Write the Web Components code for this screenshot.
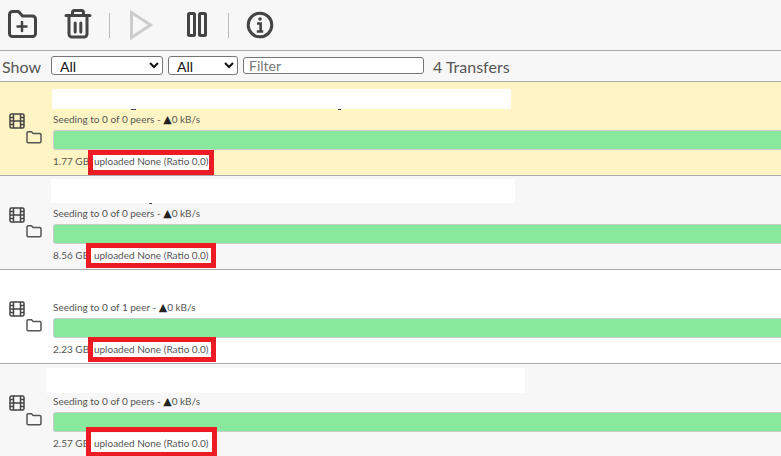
<!DOCTYPE html>
<html>
<head>
<meta charset="utf-8">
<title>Transfers</title>
<style>
  html, body {
    margin: 0;
    height: 456px;
    overflow: hidden;
    background: #fff;
    font-family: Lato, "Liberation Sans", sans-serif;
    color: #444;
  }
</style>
</head>
<body>
<tr-toolbar></tr-toolbar>
<tr-filterbar count="4 Transfers"></tr-filterbar>

<tr-row tone="selected" status="Seeding to 0 of 0 peers - " size="1.77 GB,">
  <tr-mark kind="wash" box="93 73 116 15"></tr-mark>
  <tr-mark kind="hide" box="52 7 459 20"></tr-mark>
  <tr-mark kind="speck" box="131 27 5 1"></tr-mark>
  <tr-mark kind="speck" box="338 27 3 1"></tr-mark>
  <tr-mark kind="ring" box="88 68 126 25"></tr-mark>
</tr-row>
<tr-row tone="even" status="Seeding to 0 of 0 peers - " size="8.56 GB,">
  <tr-mark kind="wash" box="91 72 120 15"></tr-mark>
  <tr-mark kind="hide" box="51 3 464 24"></tr-mark>
  <tr-mark kind="speck" box="149 27 3 1"></tr-mark>
  <tr-mark kind="ring" box="86 67 130 25"></tr-mark>
</tr-row>
<tr-row tone="odd" status="Seeding to 0 of 1 peer - " size="2.23 GB,">
  <tr-mark kind="ring" box="88 67 128 25"></tr-mark>
</tr-row>
<tr-row tone="even" status="Seeding to 0 of 0 peers - " size="2.57 GB,">
  <tr-mark kind="wash" box="91 69 121 17"></tr-mark>
  <tr-mark kind="hide" box="46 4 479 25"></tr-mark>
  <tr-mark kind="ring" box="86 63 131 30"></tr-mark>
</tr-row>

<script>
  const toolbarTemplate = document.createElement("template");
  toolbarTemplate.innerHTML = `
    <style>
      :host {
        display: flex;
        align-items: center;
        height: 50px;
        padding-left: 6px;
        background: #f7f7f7;
        border-bottom: 1px solid #aaa;
      }
      svg {
        width: 32px;
        height: 32px;
        fill: none;
        stroke: #444;
        stroke-width: 3;
        stroke-linejoin: round;
        stroke-linecap: round;
      }
      .next { margin-left: 24px; }
      .sep {
        width: 1px;
        height: 25px;
        margin: 1px 15px 0;
        background: #bbb;
      }
    </style>
    <svg viewBox="0 0 32 32">
      <path d="M3.500 5.500a3 3 0 0 1 3-3h6l4 4.500h10a3 3 0 0 1 3 3v14.500a3 3 0 0 1-3 3h-20a3 3 0 0 1-3-3z"/>
      <path d="M16 13v9M11.500 17.500h9" stroke-width="2.500"/>
    </svg>
    <svg class="next" viewBox="0 0 32 32">
      <path d="M4 6.500h24M10.500 6V3.500a2 2 0 0 1 2-2h7a2 2 0 0 1 2 2V6"/>
      <path d="M7 7v18a3 3 0 0 0 3 3h12a3 3 0 0 0 3-3V7"/>
      <path d="M13.200 14v9M18.800 14v9"/>
    </svg>
    <div class="sep"></div>
    <svg viewBox="0 0 32 32" style="stroke:#ccc">
      <path d="M6.500 3.500v25l19-12.500z" stroke-linejoin="miter"/>
    </svg>
    <svg class="next" viewBox="0 0 32 32">
      <rect x="7.500" y="4.500" width="6" height="22" rx="1"/>
      <rect x="18.500" y="4.500" width="6" height="22" rx="1"/>
    </svg>
    <div class="sep"></div>
    <svg viewBox="0 0 32 32">
      <circle cx="16" cy="16" r="11.800"/>
      <circle cx="16" cy="10" r="1.800" fill="#444" stroke="none"/>
      <path d="M13 14.500h3.600V22M12.800 22.500h6.400" stroke-linecap="butt" stroke-width="2.600" stroke-linejoin="miter"/>
    </svg>
  `;

  class TrToolbar extends HTMLElement {
    constructor() {
      super();
      this.attachShadow({ mode: "open" });
      this.shadowRoot.appendChild(toolbarTemplate.content.cloneNode(true));
    }
  }

  const filterTemplate = document.createElement("template");
  filterTemplate.innerHTML = `
    <style>
      :host {
        display: flex;
        align-items: center;
        height: 30px;
        padding-left: 2px;
        background: #f7f7f7;
        border-bottom: 1px solid #aaa;
        color: #555;
        font-size: 16px;
      }
      select, input {
        box-sizing: border-box;
        font-family: Lato, "Liberation Sans", sans-serif;
        font-size: 14px;
        background: #fff;
        color: #111;
        border: 1px solid #767676;
        border-radius: 3px;
      }
      select { height: 19px; padding: 0 0 0 4px; margin-top: -1px; line-height: 17px; }
      .show { width: 49px; }
      .s1 { width: 112px; margin-right: 5px; }
      .s2 { width: 70px; margin-right: 5px; }
      input { width: 181px; height: 17px; padding: 0 5px; margin-top: -1px; }
      input::placeholder { color: #777; }
      .count { margin-left: 9px; }
    </style>
    <span class="show">Show</span>
    <select class="s1"><option>All</option></select>
    <select class="s2"><option>All</option></select>
    <input placeholder="Filter">
    <span class="count"></span>
  `;

  class TrFilterbar extends HTMLElement {
    constructor() {
      super();
      this.attachShadow({ mode: "open" });
      this.shadowRoot.appendChild(filterTemplate.content.cloneNode(true));
    }

    connectedCallback() {
      this.shadowRoot.querySelector(".count").textContent = this.getAttribute("count");
    }
  }

  const rowTemplate = document.createElement("template");
  rowTemplate.innerHTML = `
    <style>
      :host {
        display: grid;
        grid-template-columns: 53px 1fr;
        position: relative;
        height: 93px;
        border-bottom: 1px solid #aaa;
        font-size: 10px;
        color: #555;
        overflow: hidden;
      }
      :host([tone="selected"]) { background: #fff5c4; }
      :host([tone="even"]) { background: #f7f7f7; }
      :host([tone="odd"]) { background: #fff; }
      .icons { display: flex; flex-direction: column; padding: 31px 0 0 9px; }
      svg {
        fill: none;
        stroke: #444;
        stroke-width: 1.500;
      }
      .folder { margin: 2px 0 0 17px; stroke: #555; }
      .main { position: relative; z-index: 1; padding-top: 30px; min-width: 0; }
      .status { height: 14px; line-height: 14px; margin-bottom: 4px; white-space: pre; }
      .up { font-family: "DejaVu Sans", sans-serif; font-size: 11px; line-height: 10px; color: #222; }
      .bar {
        height: 18px;
        background: #88e89c;
        border: 1px solid #ccc;
        border-right: 0;
        border-radius: 3px 0 0 3px;
        margin-bottom: 4px;
      }
      .size { height: 14px; line-height: 14px; white-space: pre; }
    </style>
    <div class="icons">
      <svg width="16" height="16" viewBox="0 0 16 16">
        <rect x="1" y="1" width="14" height="14" rx="1.500"/>
        <path d="M4.500 1v14M11.500 1v14M4.500 8h7M1 4.500h3.500M1 8h3.500M1 11.500h3.500M11.500 4.500h3.500M11.500 8h3.500M11.500 11.500h3.500"/>
      </svg>
      <svg class="folder" width="16" height="13" viewBox="0 0 16 13">
        <path d="M1 2a1.200 1.200 0 0 1 1.200-1.200h3.300l1.600 1.800h6.700a1.200 1.200 0 0 1 1.200 1.200v6.800a1.200 1.200 0 0 1-1.200 1.200h-11.600a1.200 1.200 0 0 1-1.200-1.200z"/>
      </svg>
    </div>
    <div class="main">
      <div class="status"><span class="text"></span><span class="up">▲</span>0 kB/s</div>
      <div class="bar"></div>
      <div class="size"></div>
    </div>
    <slot></slot>
  `;

  class TrRow extends HTMLElement {
    constructor() {
      super();
      this.attachShadow({ mode: "open" });
      this.shadowRoot.appendChild(rowTemplate.content.cloneNode(true));
    }

    connectedCallback() {
      const root = this.shadowRoot;
      root.querySelector(".text").textContent = this.getAttribute("status");
      root.querySelector(".size").textContent = this.getAttribute("size") + " uploaded None (Ratio 0.0)";
    }
  }

  const markTemplate = document.createElement("template");
  markTemplate.innerHTML = `
    <style>
      :host { position: absolute; box-sizing: border-box; z-index: 2; }
      :host([kind="wash"]) { background: #fff; z-index: 0; }
      :host([kind="hide"]) { background: #fff; }
      :host([kind="speck"]) { background: #445; }
      :host([kind="ring"]) { border: 5px solid #ed1c24; }
    </style>
  `;

  // redaction boxes and red highlights drawn over the row, box = "x y w h" from the row corner
  class TrMark extends HTMLElement {
    constructor() {
      super();
      this.attachShadow({ mode: "open" });
      this.shadowRoot.appendChild(markTemplate.content.cloneNode(true));
    }

    connectedCallback() {
      const [x, y, w, h] = this.getAttribute("box").split(" ");
      this.style.left = x + "px";
      this.style.top = y + "px";
      this.style.width = w + "px";
      this.style.height = h + "px";
    }
  }

  customElements.define("tr-toolbar", TrToolbar);
  customElements.define("tr-filterbar", TrFilterbar);
  customElements.define("tr-row", TrRow);
  customElements.define("tr-mark", TrMark);
</script>
</body>
</html>
